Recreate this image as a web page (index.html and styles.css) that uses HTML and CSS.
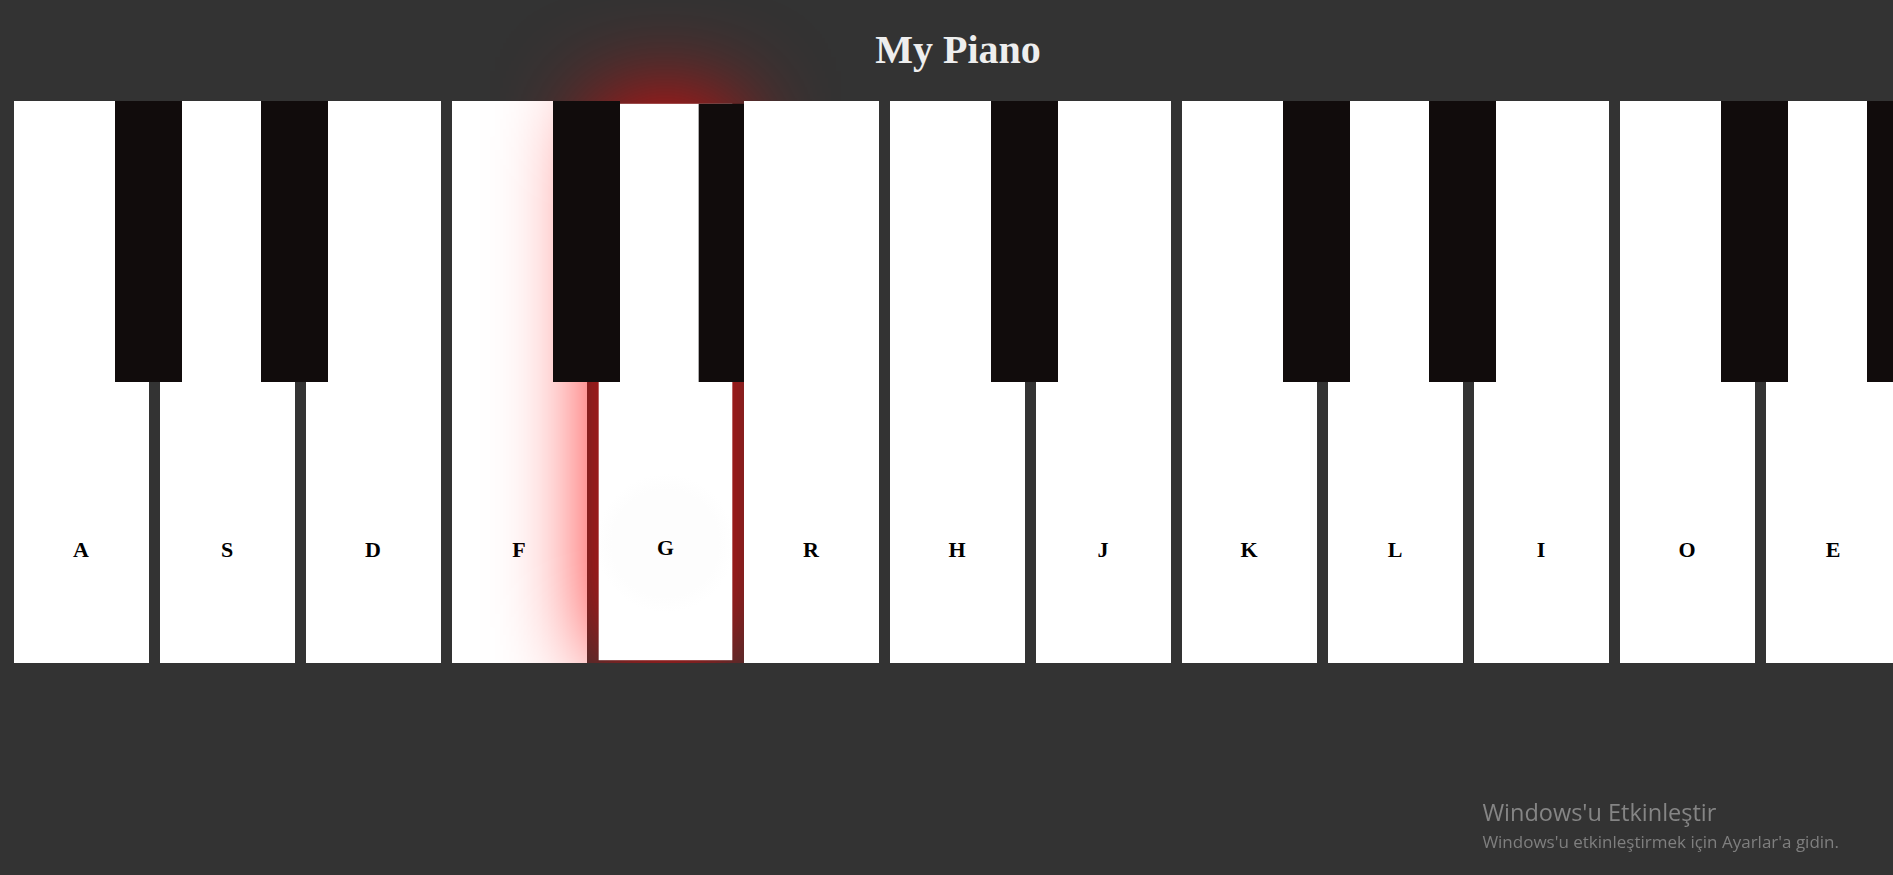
FILE: index.html
```html
<!DOCTYPE html>
<html lang="en">
<head>
    <meta charset="UTF-8">
    <meta name="viewport" content="width=device-width, initial-scale=1.0">
    <title>My Piano</title>
    <link rel="stylesheet" href="styles.css">
</head>
<body>

<div class="piano-app">
    <h1 class="title">My Piano</h1>

    <div class="keyboard">
        <div class="key white"><div class="key black"></div><span class="label">A</span></div>
        <div class="key white"><div class="key black"></div><span class="label">S</span></div>
        <div class="key white"><span class="label">D</span></div>
        <div class="key white"><div class="key black"></div><span class="label">F</span></div>
        <div class="key white active"><div class="key black"></div><span class="label">G</span></div>
        <div class="key white"><span class="label">R</span></div>
        <div class="key white"><div class="key black"></div><span class="label">H</span></div>
        <div class="key white"><span class="label">J</span></div>
        <div class="key white"><div class="key black"></div><span class="label">K</span></div>
        <div class="key white"><div class="key black"></div><span class="label">L</span></div>
        <div class="key white"><span class="label">I</span></div>
        <div class="key white"><div class="key black"></div><span class="label">O</span></div>
        <div class="key white"><div class="key black"></div><span class="label">E</span></div>
    </div>
</div>

<div class="activation">
    <p class="activation-title">Windows'u Etkinleştir</p>
    <p class="activation-text">Windows'u etkinleştirmek için Ayarlar'a gidin.</p>
</div>

</body>
</html>
```

FILE: styles.css
```css
body {
    margin: 0;
    background-color: #333333;
    font-family: 'Liberation Serif', 'Times New Roman', serif;
}

.piano-app {
    padding-left: 8px;
    overflow-x: clip;
}

.title {
    margin: 27px 0 28px;
    padding-left: 15px;
    font-size: 40px;
    line-height: 46px;
    font-weight: bold;
    color: #eeeeee;
    text-align: center;
}

.keyboard {
    display: flex;
}

.key.white {
    position: relative;
    flex: 0 0 135px;
    height: 562px;
    margin: 0 5.5px;
    background-color: #ffffff;
    display: flex;
    align-items: flex-end;
    justify-content: center;
    padding-bottom: 100px;
    box-sizing: border-box;
}

.key.black {
    position: absolute;
    top: 0;
    left: 75%;
    width: 50%;
    height: 50%;
    background-color: #110c0c;
    z-index: 1;
}

.label {
    font-size: 22px;
    font-weight: bold;
    color: #000000;
}

.key.white.active {
    transform: scale(0.99);
    box-shadow: 0 0 100px red;
    background: radial-gradient(circle at 50% 79%, #fdfdfd 0, #fdfdfd 54px, #ffffff 70px);
}

.activation {
    position: fixed;
    right: 54px;
    top: 796px;
    font-family: 'Open Sans', 'Noto Sans', sans-serif;
}

.activation p {
    margin: 0;
}

.activation-title {
    font-size: 23.5px;
    line-height: 32px;
    color: #858585;
}

.activation-text {
    font-size: 17px;
    line-height: 27px;
    color: #7f7f7f;
}
```
